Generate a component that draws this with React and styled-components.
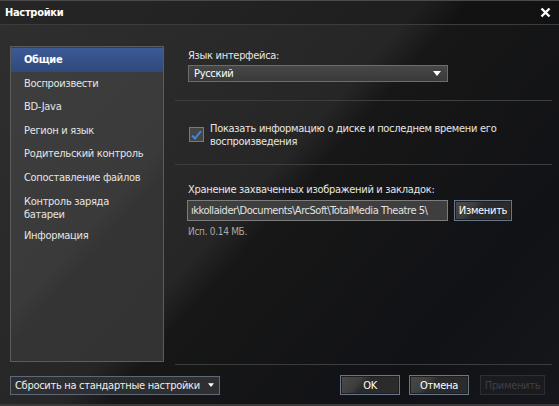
import { createGlobalStyle } from 'styled-components';
import styled from 'styled-components';

const GlobalStyle = createGlobalStyle`
  html, body { margin: 0; padding: 0; background: #0e0e0e; }
  body {
    font-family: "DejaVu Sans Condensed", "DejaVu Sans", sans-serif;
    font-stretch: condensed;
    font-size: 11px;
    letter-spacing: -0.3px;
    color: #e8e8e8;
  }
`;

const Window = styled.div`
  width: 559px;
  height: 406px;
  box-sizing: border-box;
  display: flex;
  flex-direction: column;
  border-top: 1px solid #4a4a4a;
  border-bottom: 2px solid #3a3a3a;
  background: linear-gradient(132deg, #2f2f2f 0%, #262626 46%, #171717 51%, #111216 80%, #15171c 100%);
  overflow: hidden;
`;

const TitleBar = styled.div`
  height: 23px;
  display: flex;
  align-items: center;
  justify-content: space-between;
  padding: 0 8px 0 5px;
  border-bottom: 1px solid #3c3c3c;
  background: rgba(0, 0, 0, 0.18);
`;

const Title = styled.span`
  font-weight: bold;
  font-size: 11px;
  color: #fff;
`;

const Close = styled.svg`
  width: 11px;
  height: 11px;
`;

const Body = styled.div`
  display: flex;
  gap: 11px;
  padding: 21px 7px 0 10px;
`;

const Nav = styled.ul`
  list-style: none;
  margin: 0;
  padding: 1px 0 0;
  width: 154px;
  height: 316px;
  box-sizing: border-box;
  border: 1px solid #5c5c5c;
  background: linear-gradient(132deg, #3e3e3e 0%, #3a3a3a 55%, #343434 62%, #333 100%);
`;

const NavItem = styled.li`
  padding: ${p => (p.$tall ? '6px 0 3px 13px' : '0 0 0 13px')};
  min-height: ${p => (p.$tall ? 'auto' : '23.5px')};
  display: flex;
  align-items: center;
  line-height: 13px;
  white-space: nowrap;
  font-weight: ${p => (p.$active ? 'bold' : 'normal')};
  color: ${p => (p.$active ? '#fff' : '#e4e4e4')};
  background: ${p => (p.$active ? 'linear-gradient(#3b5a95, #30497c)' : 'transparent')};
`;

const Content = styled.div`
  flex: 1;
  height: 318px;
  border-bottom: 1px solid #3a3c40;
  display: flex;
  flex-direction: column;
`;

const Section = styled.div`
  padding: ${p => p.$pad};
  border-bottom: ${p => (p.$line ? '1px solid #3e3e3e' : 'none')};
`;

const Label = styled.div`
  padding-left: 13px;
  line-height: 15px;
  color: #e6e6e6;
`;

const Select = styled.div`
  margin: 2px 0 0 13px;
  width: 260px;
  height: 17px;
  box-sizing: border-box;
  display: flex;
  align-items: center;
  justify-content: space-between;
  padding: 0 6px 0 5px;
  border: 1px solid #6c6c6c;
  background: linear-gradient(#474747, #3a3a3a);
  color: #fff;
`;

const Arrow = styled.svg`
  flex: none;
  width: ${p => (p.$small ? '6px' : '8px')};
  height: ${p => (p.$small ? '4px' : '5px')};
`;

const CheckRow = styled.label`
  display: flex;
  align-items: flex-start;
  gap: 6px;
  padding-left: 14px;
  line-height: 13px;
  color: #e6e6e6;
`;

const Box = styled.span`
  flex: none;
  width: 15px;
  height: 15px;
  box-sizing: border-box;
  margin-top: 5px;
  border: 1px solid #7a7a7a;
  background: #454545;
  display: flex;
  align-items: center;
  justify-content: center;
`;

const PathRow = styled.div`
  display: flex;
  gap: 6px;
  padding-left: 12px;
  margin-top: 3px;
`;

const PathField = styled.div`
  width: 261px;
  height: 21px;
  box-sizing: border-box;
  border: 1px solid #7c7c7c;
  background: #3e3e3e;
  color: #e2e2e2;
  padding: 0 3px;
  line-height: 19px;
  letter-spacing: -0.45px;
  white-space: nowrap;
  overflow: hidden;
`;

const Button = styled.button`
  font: inherit;
  letter-spacing: inherit;
  height: ${p => p.$h || '21px'};
  width: ${p => p.$w};
  margin-left: ${p => p.$gap || '0'};
  padding: 0;
  white-space: nowrap;
  border: 1px solid ${p => (p.disabled ? '#2c2e33' : '#69768a')};
  background: ${p =>
    p.disabled
      ? '#1a1b1e'
      : 'linear-gradient(132deg, #4a4a4a 0%, #3e3e3e 30%, #2a2a2a 42%, #2c2c2c 100%)'};
  color: ${p => (p.disabled ? '#3e4046' : '#fff')};
  box-shadow: ${p => (p.disabled ? 'none' : 'inset 0 0 0 1px #1e1e1e')};
`;

const Note = styled.div`
  padding-left: 13px;
  margin-top: 5px;
  font-size: 10px;
  color: #a8a8a8;
`;

const Footer = styled.div`
  display: flex;
  align-items: center;
  gap: 9px;
  padding: 10px 14px 0 10px;
`;

const ResetSelect = styled.div`
  width: 210px;
  height: 19px;
  box-sizing: border-box;
  display: flex;
  align-items: center;
  justify-content: space-between;
  padding: 0 5px 0 4px;
  border: 1px solid #5e6878;
  background: #2e2f31;
  color: #eee;
  white-space: nowrap;
  margin-right: auto;
`;

const navItems = [
  'Воспроизвести',
  'BD-Java',
  'Регион и язык',
  'Родительский контроль',
  'Сопоставление файлов',
];

const DownArrow = ({ small }) => (
  <Arrow $small={small} viewBox="0 0 8 5">
    <path d="M0 0h8L4 5z" fill="#fff" />
  </Arrow>
);

export default function App() {
  return (
    <>
      <GlobalStyle />
      <Window>
        <TitleBar>
          <Title>Настройки</Title>
          <Close viewBox="0 0 11 11">
            <path d="M1.5 1.5l8 8M9.5 1.5l-8 8" stroke="#fff" strokeWidth="2.4" />
          </Close>
        </TitleBar>
        <Body>
          <Nav>
            <NavItem $active>Общие</NavItem>
            {navItems.map(t => (
              <NavItem key={t}>{t}</NavItem>
            ))}
            <NavItem $tall>Контроль заряда<br />батареи</NavItem>
            <NavItem>Информация</NavItem>
          </Nav>
          <Content>
            <Section $line $pad="2px 0 18px">
              <Label>Язык интерфейса:</Label>
              <Select>
                Русский
                <DownArrow />
              </Select>
            </Section>
            <Section $line $pad="21px 0 16px">
              <CheckRow>
                <Box>
                  <svg width="11" height="10" viewBox="0 0 11 10">
                    <path d="M1 5.5l3 3L10 1" fill="none" stroke="#3f86e6" strokeWidth="2" />
                  </svg>
                </Box>
                <span>
                  Показать информацию о диске и последнем времени его
                  <br />
                  воспроизведения
                </span>
              </CheckRow>
            </Section>
            <Section $pad="17px 0 0">
              <Label>Хранение захваченных изображений и закладок:</Label>
              <PathRow>
                <PathField>ıkkollaider\Documents\ArcSoft\TotalMedia Theatre 5\</PathField>
                <Button $w="58px">Изменить</Button>
              </PathRow>
              <Note>Исп. 0.14 МБ.</Note>
            </Section>
          </Content>
        </Body>
        <Footer>
          <ResetSelect>
            Сбросить на стандартные настройки
            <DownArrow small />
          </ResetSelect>
          <Button $w="60px" $h="20px">OK</Button>
          <Button $w="60px" $h="20px">Отмена</Button>
          <Button $w="65px" $h="20px" $gap="2px" disabled>Применить</Button>
        </Footer>
      </Window>
    </>
  );
}
